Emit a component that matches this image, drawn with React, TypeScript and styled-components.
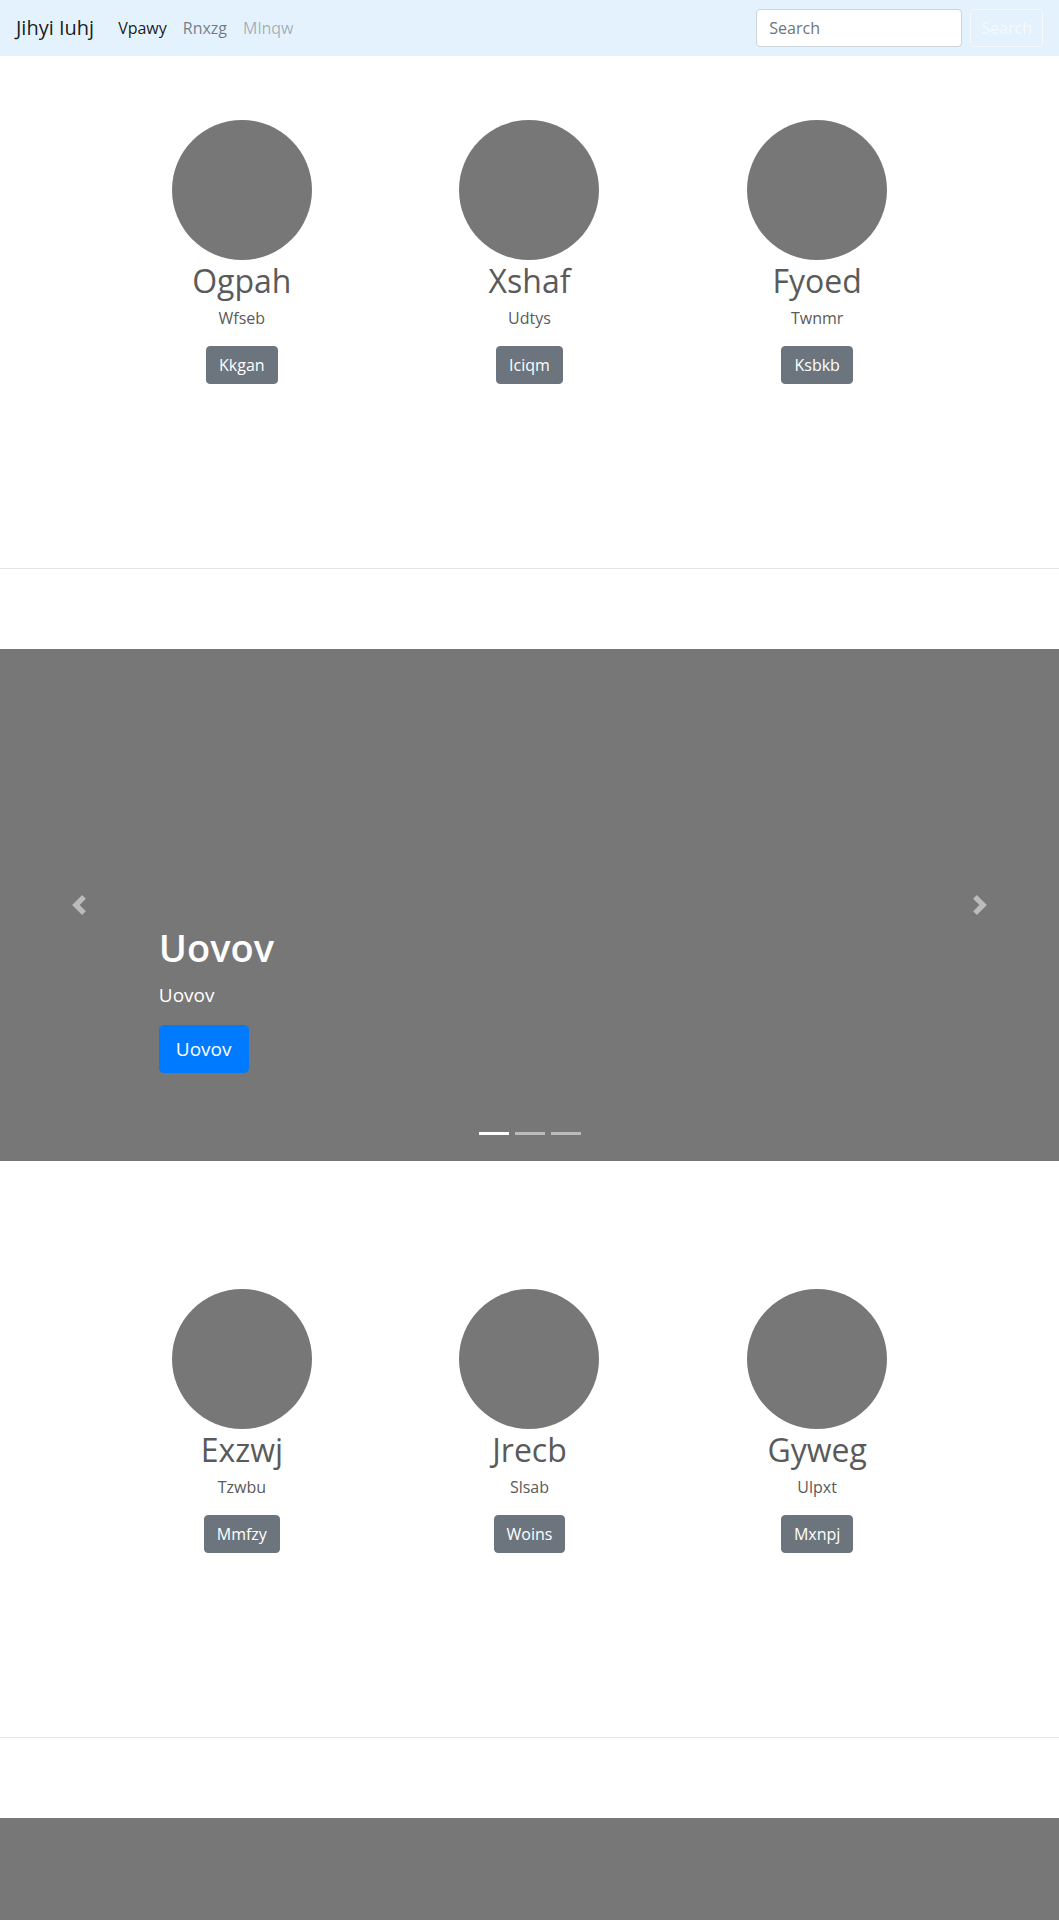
import styled, { createGlobalStyle } from 'styled-components';

const GlobalStyle = createGlobalStyle`
  * { box-sizing: border-box; }
  body {
    margin: 0;
    font-family: "Open Sans", "Noto Sans", "Liberation Sans", sans-serif;
    font-size: 16px;
    line-height: 1.5;
    color: #5a5a5a;
    background: #fff;
  }
`;

type LinkState = 'active' | 'normal' | 'disabled';

const linkColors: Record<LinkState, string> = {
  active: 'rgba(0,0,0,0.9)',
  normal: 'rgba(0,0,0,0.5)',
  disabled: 'rgba(0,0,0,0.3)',
};

const NavBar = styled.nav`
  display: flex;
  align-items: center;
  height: 56px;
  padding: 8px 16px;
  background: #e3f2fd;
`;

const Brand = styled.a`
  margin-right: 16px;
  padding: 5px 0;
  font-size: 20px;
  line-height: 30px;
  color: rgba(0, 0, 0, 0.9);
  text-decoration: none;
`;

const NavList = styled.ul`
  display: flex;
  margin: 0 auto 0 0;
  padding: 0;
  list-style: none;
`;

const NavLink = styled.a<{ $state: LinkState }>`
  display: block;
  padding: 8px;
  color: ${(p) => linkColors[p.$state]};
  text-decoration: none;
`;

const SearchForm = styled.form`
  display: flex;
  align-items: center;
`;

const SearchInput = styled.input`
  width: 206px;
  height: 38px;
  margin-right: 8px;
  padding: 6px 12px;
  font: inherit;
  color: #495057;
  background: #fff;
  border: 1px solid #ced4da;
  border-radius: 4px;
  &::placeholder {
    color: #6c757d;
  }
`;

const SearchButton = styled.button`
  height: 38px;
  padding: 6px 10px;
  font: inherit;
  color: #f8f9fa;
  background: transparent;
  border: 1px solid #f8f9fa;
  border-radius: 4px;
`;

const Marketing = styled.section`
  padding: 64px 0 104px;
`;

const FeatureRow = styled.div`
  display: grid;
  grid-template-columns: repeat(3, 1fr);
  width: 863px;
  margin: 0 auto;
`;

const Feature = styled.div`
  display: flex;
  flex-direction: column;
  align-items: center;
  text-align: center;
`;

const Avatar = styled.div`
  width: 140px;
  height: 140px;
  border-radius: 50%;
  background: #777;
`;

const FeatureTitle = styled.h2`
  margin: 1px 0 5px;
  font-size: 32px;
  font-weight: 400;
  line-height: 40px;
`;

const FeatureText = styled.p`
  margin: 0 12px 16px;
`;

const SecondaryButton = styled.a`
  display: inline-block;
  padding: 6px 12px;
  line-height: 24px;
  color: #fff;
  background: #6c757d;
  border: 1px solid #6c757d;
  border-radius: 4px;
  text-decoration: none;
`;

const Divider = styled.hr`
  height: 0;
  margin: 80px 0;
  border: 0;
  border-top: 1px solid rgba(0, 0, 0, 0.1);
`;

const Carousel = styled.div`
  position: relative;
  height: 512px;
  margin-bottom: 64px;
  background: #777;
`;

const Caption = styled.div`
  position: absolute;
  left: 15%;
  right: 15%;
  bottom: 48px;
  z-index: 10;
  padding: 20px 0;
  color: #fff;
`;

const CaptionTitle = styled.h1`
  margin: 0 0 10px;
  font-size: 38px;
  font-weight: 600;
  line-height: 1.2;
`;

const CaptionText = styled.p`
  margin: 0 0 16px;
  font-size: 19px;
  line-height: 1.5;
`;

const PrimaryButton = styled.a`
  display: inline-block;
  margin-bottom: 20px;
  padding: 8px 16px;
  font-size: 19px;
  line-height: 30px;
  color: #fff;
  background: #007bff;
  border: 1px solid #007bff;
  border-radius: 4.8px;
  text-decoration: none;
`;

const Control = styled.a<{ $side: 'left' | 'right' }>`
  position: absolute;
  top: 0;
  bottom: 0;
  ${(p) => p.$side}: 0;
  width: 15%;
  display: flex;
  align-items: center;
  justify-content: center;
  opacity: 0.5;
  svg {
    width: 20px;
    height: 20px;
  }
`;

const Indicators = styled.ol`
  position: absolute;
  left: 0;
  right: 0;
  bottom: 10px;
  z-index: 15;
  display: flex;
  justify-content: center;
  margin: 0 15% 16px;
  padding: 0;
  list-style: none;
`;

const Indicator = styled.li<{ $active?: boolean }>`
  width: 30px;
  height: 3px;
  margin: 0 3px;
  background: ${(p) => (p.$active ? '#fff' : 'rgba(255,255,255,0.5)')};
`;

interface FeatureData {
  title: string;
  text: string;
  button: string;
}

const firstRow: FeatureData[] = [
  { title: 'Ogpah', text: 'Wfseb', button: 'Kkgan' },
  { title: 'Xshaf', text: 'Udtys', button: 'Iciqm' },
  { title: 'Fyoed', text: 'Twnmr', button: 'Ksbkb' },
];

const secondRow: FeatureData[] = [
  { title: 'Exzwj', text: 'Tzwbu', button: 'Mmfzy' },
  { title: 'Jrecb', text: 'Slsab', button: 'Woins' },
  { title: 'Gyweg', text: 'Ulpxt', button: 'Mxnpj' },
];

const Features = ({ items }: { items: FeatureData[] }) => (
  <Marketing>
    <FeatureRow>
      {items.map((item) => (
        <Feature key={item.title}>
          <Avatar />
          <FeatureTitle>{item.title}</FeatureTitle>
          <FeatureText>{item.text}</FeatureText>
          <SecondaryButton href="#">{item.button}</SecondaryButton>
        </Feature>
      ))}
    </FeatureRow>
  </Marketing>
);

// the second slider starts near the bottom edge, only its top shows
const Slider = ({ label }: { label?: string }) => (
  <Carousel>
    {label && (
      <Caption>
        <CaptionTitle>{label}</CaptionTitle>
        <CaptionText>{label}</CaptionText>
        <PrimaryButton href="#">{label}</PrimaryButton>
      </Caption>
    )}
    <Control $side="left" href="#" aria-label="Previous">
      <svg viewBox="0 0 8 8" fill="#fff">
        <path d="M5.25 0l-4 4 4 4 1.5-1.5-2.5-2.5 2.5-2.5-1.5-1.5z" />
      </svg>
    </Control>
    <Control $side="right" href="#" aria-label="Next">
      <svg viewBox="0 0 8 8" fill="#fff">
        <path d="M2.75 0l-1.5 1.5 2.5 2.5-2.5 2.5 1.5 1.5 4-4-4-4z" />
      </svg>
    </Control>
    <Indicators>
      <Indicator $active />
      <Indicator />
      <Indicator />
    </Indicators>
  </Carousel>
);

export default function App() {
  return (
    <>
      <GlobalStyle />
      <NavBar>
        <Brand href="#">Jihyi Iuhj</Brand>
        <NavList>
          <li><NavLink $state="active" href="#">Vpawy</NavLink></li>
          <li><NavLink $state="normal" href="#">Rnxzg</NavLink></li>
          <li><NavLink $state="disabled" href="#">Mlnqw</NavLink></li>
        </NavList>
        <SearchForm onSubmit={(e) => e.preventDefault()}>
          <SearchInput type="search" placeholder="Search" />
          <SearchButton type="submit">Search</SearchButton>
        </SearchForm>
      </NavBar>
      <Features items={firstRow} />
      <Divider />
      <Slider label="Uovov" />
      <Features items={secondRow} />
      <Divider />
      <Slider />
    </>
  );
}
